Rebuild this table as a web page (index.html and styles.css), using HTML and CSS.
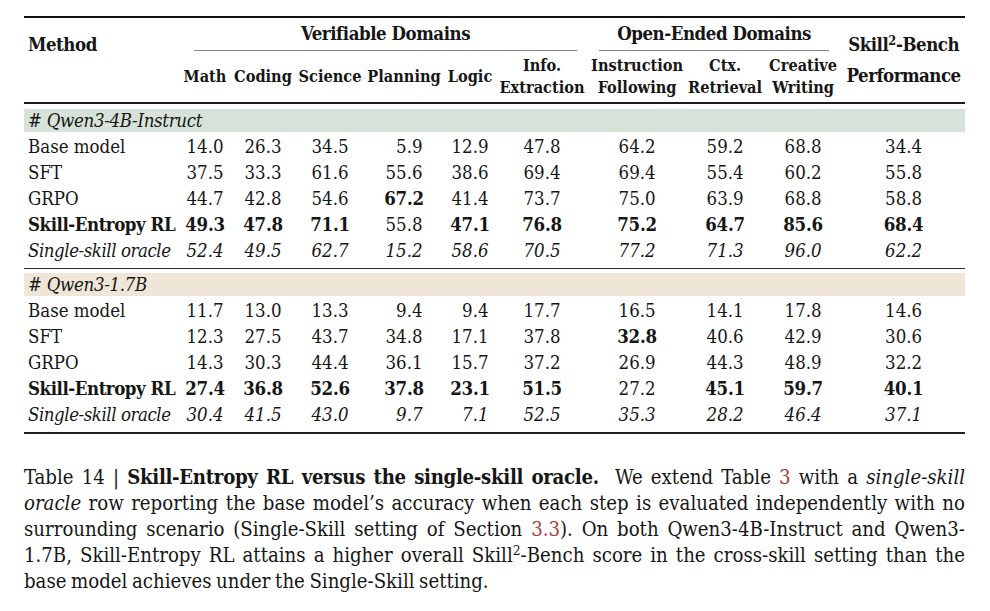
FILE: index.html
```html
<!DOCTYPE html>
<html lang="en">
<head>
<meta charset="utf-8">
<title>Table 14</title>
<link rel="stylesheet" href="styles.css">
</head>
<body>
<div class="page">
  <table class="results">
    <colgroup>
      <col class="c-method"><col class="c-math"><col class="c-coding"><col class="c-science"><col class="c-planning"><col class="c-logic"><col class="c-info"><col class="c-instr"><col class="c-ctx"><col class="c-creative"><col class="c-perf">
    </colgroup>
    <thead>
      <tr class="hrow-a">
        <th rowspan="2" class="h-method">Method</th>
        <th colspan="6" class="h-group"><div class="grp grp-ver">Verifiable Domains</div></th>
        <th colspan="3" class="h-group"><div class="grp grp-open">Open-Ended Domains</div></th>
        <th rowspan="2" class="h-perf">Skill<sup>2</sup>-Bench<br>Performance</th>
      </tr>
      <tr class="hrow-b">
        <th>Math</th><th>Coding</th><th>Science</th><th>Planning</th><th>Logic</th>
        <th>Info.<br>Extraction</th><th>Instruction<br>Following</th><th>Ctx.<br>Retrieval</th><th>Creative<br>Writing</th>
      </tr>
    </thead>
    <tbody class="group g1">
      <tr class="band-row"><td colspan="11"><div class="band band-green"># Qwen3-4B-Instruct</div></td></tr>
      <tr><td class="m">Base model</td><td>14.0</td><td>26.3</td><td>34.5</td><td><span class="ph">0</span>5.9</td><td>12.9</td><td>47.8</td><td>64.2</td><td>59.2</td><td>68.8</td><td>34.4</td></tr>
      <tr><td class="m">SFT</td><td>37.5</td><td>33.3</td><td>61.6</td><td>55.6</td><td>38.6</td><td>69.4</td><td>69.4</td><td>55.4</td><td>60.2</td><td>55.8</td></tr>
      <tr><td class="m">GRPO</td><td>44.7</td><td>42.8</td><td>54.6</td><td class="b">67.2</td><td>41.4</td><td>73.7</td><td>75.0</td><td>63.9</td><td>68.8</td><td>58.8</td></tr>
      <tr class="ours"><td class="m b">Skill-Entropy RL</td><td class="b">49.3</td><td class="b">47.8</td><td class="b">71.1</td><td>55.8</td><td class="b">47.1</td><td class="b">76.8</td><td class="b">75.2</td><td class="b">64.7</td><td class="b">85.6</td><td class="b">68.4</td></tr>
      <tr class="oracle last"><td class="m">Single-skill oracle</td><td>52.4</td><td>49.5</td><td>62.7</td><td>15.2</td><td>58.6</td><td>70.5</td><td>77.2</td><td>71.3</td><td>96.0</td><td>62.2</td></tr>
    </tbody>
    <tbody class="group g2">
      <tr class="band-row"><td colspan="11"><div class="band band-beige"># Qwen3-1.7B</div></td></tr>
      <tr><td class="m">Base model</td><td>11.7</td><td>13.0</td><td>13.3</td><td><span class="ph">0</span>9.4</td><td><span class="ph">0</span>9.4</td><td>17.7</td><td>16.5</td><td>14.1</td><td>17.8</td><td>14.6</td></tr>
      <tr><td class="m">SFT</td><td>12.3</td><td>27.5</td><td>43.7</td><td>34.8</td><td>17.1</td><td>37.8</td><td class="b">32.8</td><td>40.6</td><td>42.9</td><td>30.6</td></tr>
      <tr><td class="m">GRPO</td><td>14.3</td><td>30.3</td><td>44.4</td><td>36.1</td><td>15.7</td><td>37.2</td><td>26.9</td><td>44.3</td><td>48.9</td><td>32.2</td></tr>
      <tr class="ours"><td class="m b">Skill-Entropy RL</td><td class="b">27.4</td><td class="b">36.8</td><td class="b">52.6</td><td class="b">37.8</td><td class="b">23.1</td><td class="b">51.5</td><td>27.2</td><td class="b">45.1</td><td class="b">59.7</td><td class="b">40.1</td></tr>
      <tr class="oracle last"><td class="m">Single-skill oracle</td><td>30.4</td><td>41.5</td><td>43.0</td><td><span class="ph">0</span>9.7</td><td><span class="ph">0</span>7.1</td><td>52.5</td><td>35.3</td><td>28.2</td><td>46.4</td><td>37.1</td></tr>
    </tbody>
  </table>

  <p class="caption">
    <span class="ln">Table 14 | <b>Skill-Entropy RL versus the single-skill oracle.</b>&nbsp; We extend Table <a class="ref" href="#">3</a> with a <i>single-skill</i></span>
    <span class="ln"><i>oracle</i> row reporting the base model’s accuracy when each step is evaluated independently with no</span>
    <span class="ln">surrounding scenario (Single-Skill setting of Section <a class="ref" href="#">3.3</a>). On both Qwen3-4B-Instruct and Qwen3-</span>
    <span class="ln">1.7B, Skill-Entropy RL attains a higher overall Skill<sup>2</sup>-Bench score in the cross-skill setting than the</span>
    <span class="ln ln-last">base model achieves under the Single-Skill setting.</span>
  </p>
</div>
</body>
</html>
```

FILE: styles.css
```css
* { box-sizing: border-box; }

html, body {
  margin: 0;
  padding: 0;
  background: #ffffff;
}

body {
  font-family: "DejaVu Serif", "Liberation Serif", serif;
  font-stretch: condensed;
  font-size: 18.5px;
  color: #161616;
}

.page {
  width: 990px;
  padding: 16px 25px 0 24px;
}

/* ---------- table ---------- */
.results {
  width: 941px;
  table-layout: fixed;
  border-collapse: separate;
  border-spacing: 0;
  border-top: 2px solid #111;
  border-bottom: 2px solid #222;
}

.c-method   { width: 156px; }
.c-math     { width: 50px; }
.c-coding   { width: 66px; }
.c-science  { width: 68px; }
.c-planning { width: 80px; }
.c-logic    { width: 52px; }
.c-info     { width: 92px; }
.c-instr    { width: 98px; }
.c-ctx      { width: 78px; }
.c-creative { width: 78px; }
.c-perf     { width: 123px; }

.results th {
  padding: 0;
  font-weight: bold;
  line-height: 22px;
  white-space: nowrap;
  letter-spacing: -0.45px;
}

.hrow-a th { height: 33px; }

.hrow-b th {
  height: 53px;
  vertical-align: middle;
  text-align: center;
  font-size: 16.2px;
  letter-spacing: 0;
  border-bottom: 2px solid #1c1c1c;
}

.h-method {
  vertical-align: top;
  text-align: left;
  padding: 11px 0 0 4px !important;
  line-height: 31px !important;
  border-bottom: 2px solid #1c1c1c;
}

.h-perf {
  vertical-align: top;
  text-align: center;
  padding-top: 11px !important;
  line-height: 31px !important;
  letter-spacing: -0.5px !important;
  border-bottom: 2px solid #1c1c1c;
}

.h-group {
  vertical-align: top;
  text-align: center;
}

.grp {
  padding: 5px 0;
  border-bottom: 1px solid #8a8a8a;
}
.grp-ver  { margin: 0 11px 0 14px; }
.grp-open { margin: 0 13px 0 11px; }

sup {
  font-size: 0.68em;
  line-height: 0;
  vertical-align: 0.5em;
  letter-spacing: 0;
}

.results td {
  padding: 0;
  line-height: 26px;
  text-align: center;
  white-space: nowrap;
}

.results td.m {
  text-align: left;
  padding-left: 4px;
}

.results td.b {
  font-weight: bold;
  letter-spacing: -0.2px;
}

.results td.m.b { letter-spacing: -0.45px; }

.oracle td { font-style: italic; }
.oracle td.m { letter-spacing: -0.45px; }

.last td { padding-bottom: 4px; }

.ph { visibility: hidden; }

/* group bands */
.band-row td {
  padding: 0;
  text-align: left;
}
.band {
  margin: 5px 0 2px;
  height: 23px;
  line-height: 23px;
  padding-left: 4px;
  font-style: italic;
  letter-spacing: -0.3px;
}
.band-green { background: #d7e2d9; }
.band-beige { background: #efe6d7; }

.g2 .band-row td { border-top: 1px solid #2a2a2a; }
.g2 .band { margin-top: 4px; }

/* ---------- caption ---------- */
.caption {
  margin: 30px 0 0;
  width: 941px;
  font-size: 20.2px;
  line-height: 26px;
  word-spacing: -1.2px;
}

.caption b { letter-spacing: -0.3px; }

.ln {
  display: block;
  white-space: nowrap;
  text-align: justify;
  text-align-last: justify;
}
.ln-last { text-align-last: left; }

.ref {
  color: #a5423c;
  text-decoration: none;
}
```
